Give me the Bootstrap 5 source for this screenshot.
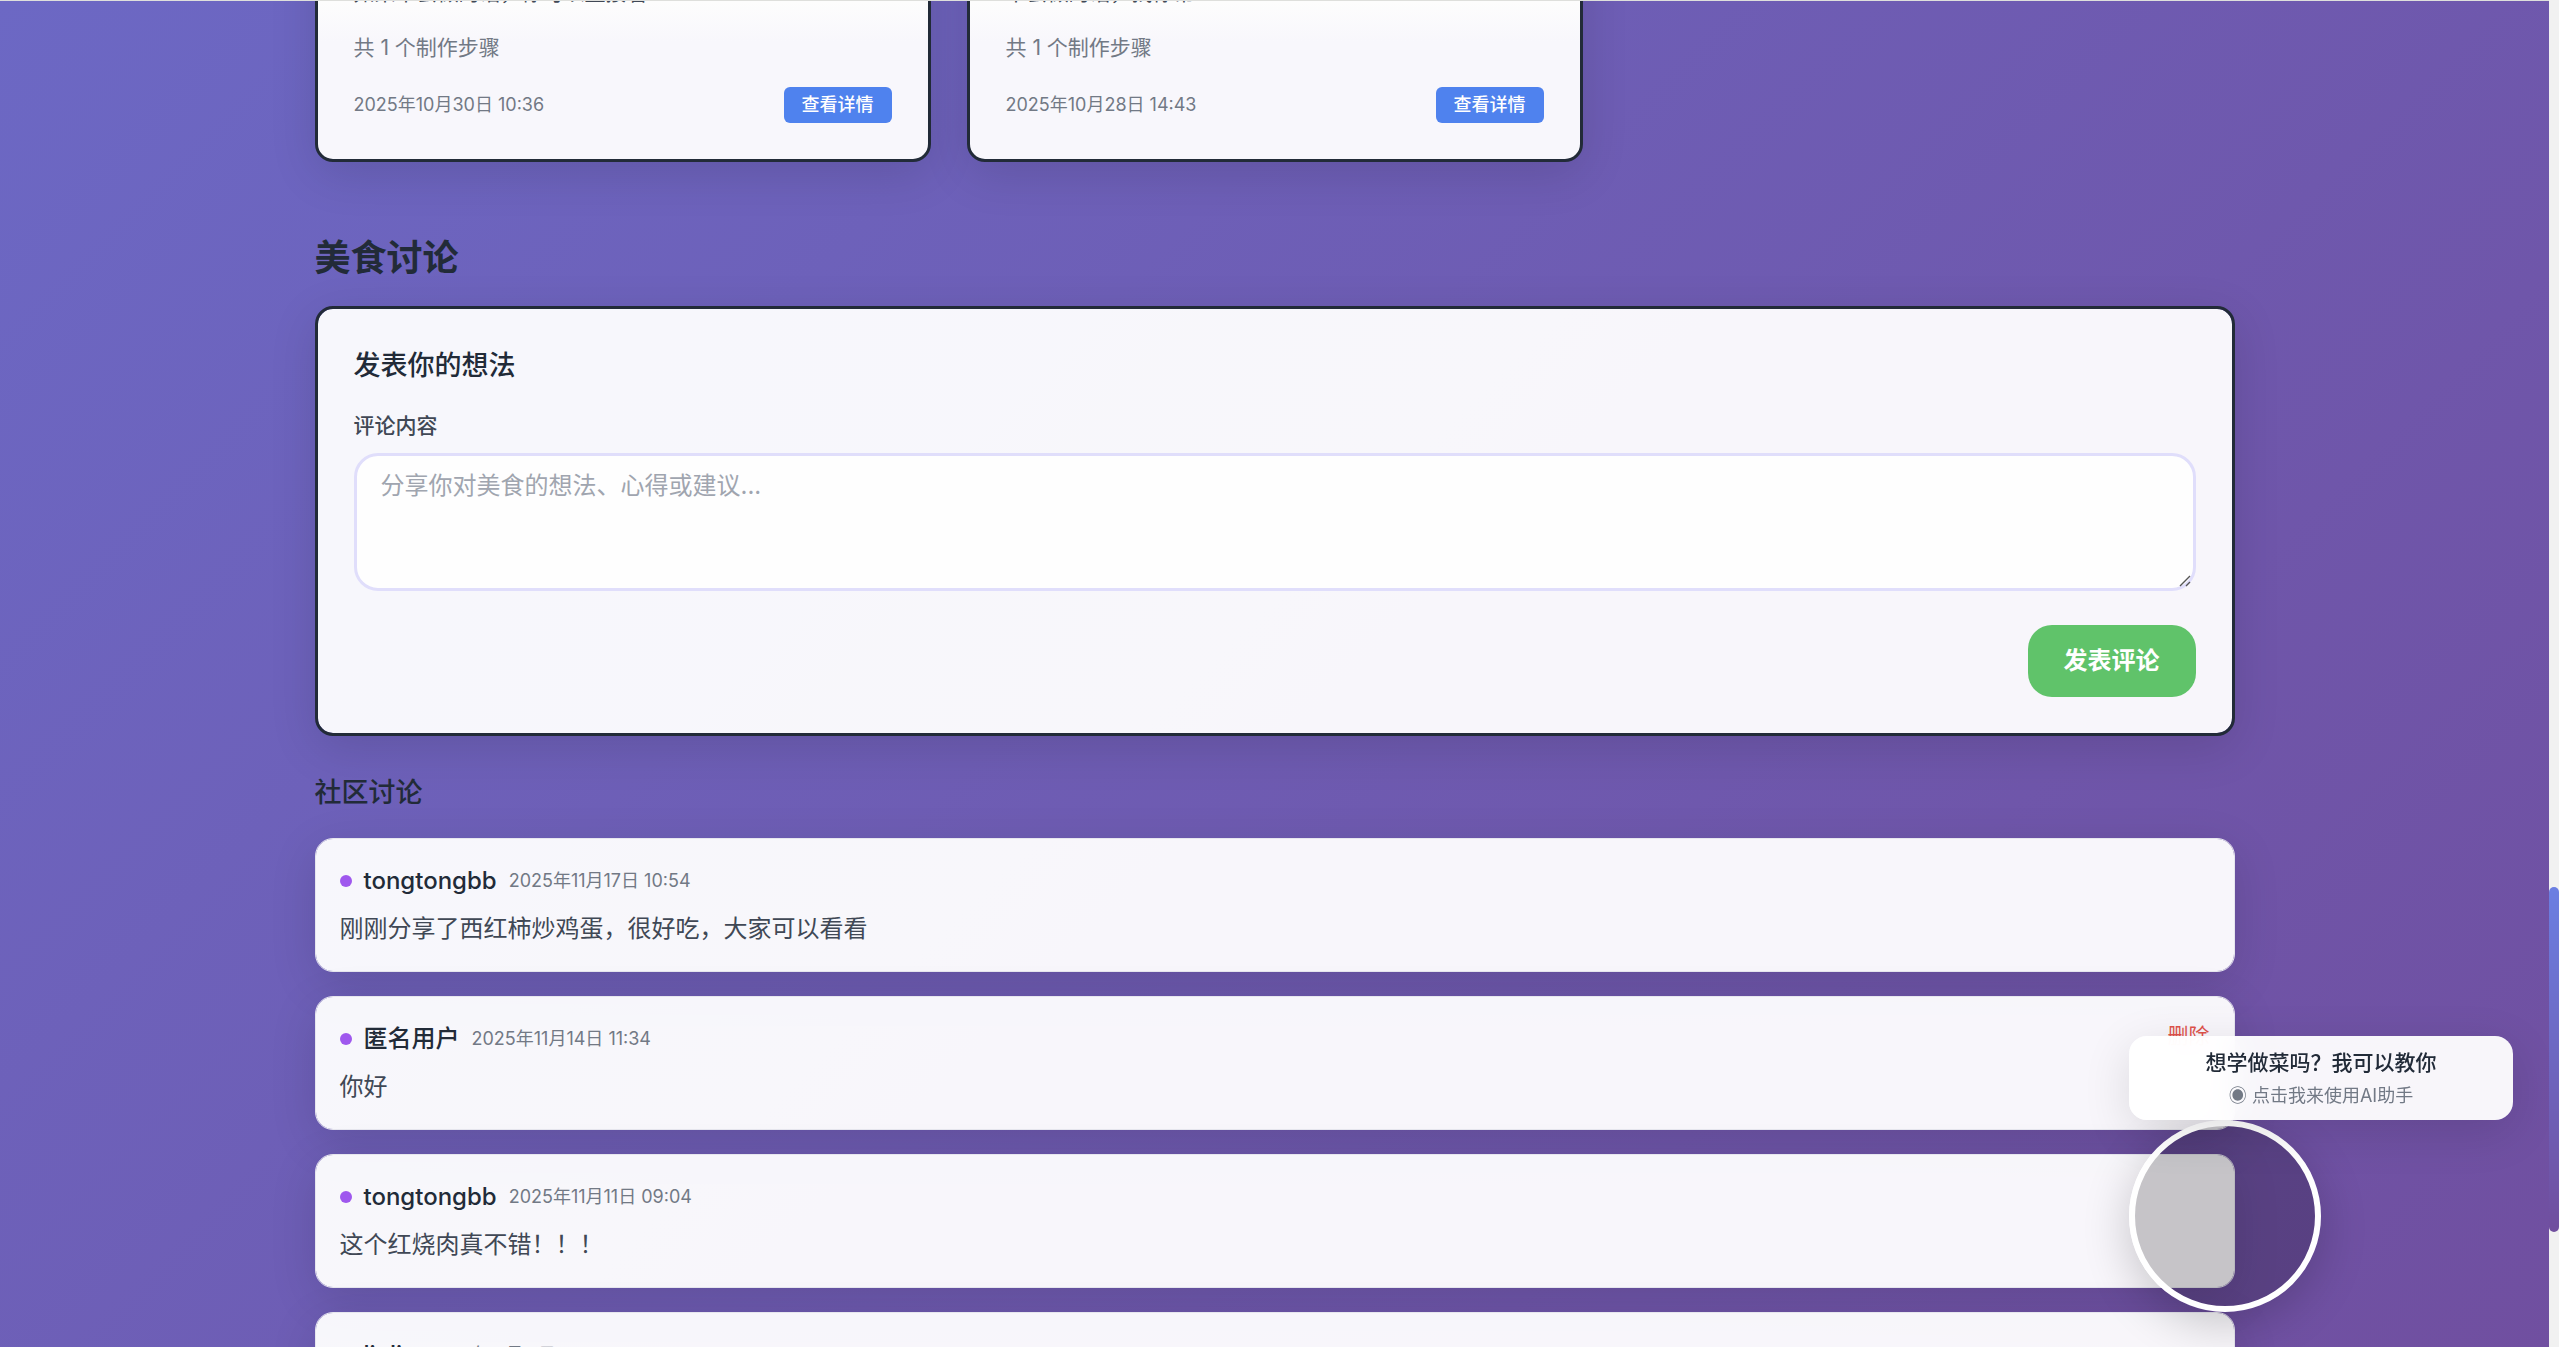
<!DOCTYPE html>
<html lang="zh-CN">
<head>
<meta charset="utf-8">
<meta name="viewport" content="width=device-width, initial-scale=1">
<title>美食讨论</title>
<link href="https://cdn.jsdelivr.net/npm/bootstrap@5.3.0/dist/css/bootstrap.min.css" rel="stylesheet">
<style>
  body {
    font-family: Inter, "Noto Sans CJK SC", sans-serif;
    color: #222b38;
    background: linear-gradient(135deg, #6c68c4 0%, #704fa0 100%) no-repeat;
    height: 100vh;
    overflow: hidden;
    font-size: 24px;
    line-height: 36px;
  }
  .top-line { height: 1px; background: #dedfdc; z-index: 5; }
  .page-scroll { width: 10px; background: #f1f1f1; z-index: 6; }
  .page-thumb { top: 887px; height: 345px; border-radius: 5px; background: linear-gradient(180deg, #6b7fe2, #704e9e); }
  .page-wrap { padding-right: 10px; }
  .page-main { max-width: 1920px; }
  .recipe-grid { display: grid; grid-template-columns: repeat(3, 1fr); gap: 36px; margin-bottom: 72px; margin-top: -61px; }
  .panel-box {
    background: rgba(255, 255, 255, .95);
    border: 3px solid #222b38;
    border-radius: 18px;
    padding: 36px;
    box-shadow: 0 12px 48px rgba(0, 0, 0, .12);
    background-clip: padding-box;
  }
  .recipe-box { background: linear-gradient(#fdfdfd 60px, #f8f7fc 100px); }
  .recipe-text { margin-bottom: 25px; }
  .comment-form { margin-bottom: 36px; }
  .txt-md { font-size: 21px; line-height: 30px; }
  .txt-sm { font-size: 18px; line-height: 24px; }
  .ink-mute { color: #727985; }
  .ink-mid { color: #404855; }
  .btn-view { font-size: 18px; line-height: 24px; padding: 6px 18px; border: 0; border-radius: 6px; background: #4f82ee; color: #fff; font-weight: 500; }
  .title-xl { font-size: 36px; line-height: 48px; font-weight: 700; margin-bottom: 24px; }
  .title-md { font-size: 27px; line-height: 42px; font-weight: 500; margin-bottom: 24px; }
  .label-md { font-size: 21px; line-height: 30px; margin-bottom: 12px; }
  .area-wrap { margin-bottom: 34px; }
  .input-area, .input-area:focus {
    display: block; height: 138px; padding: 12px 24px; border: 3px solid #e0defb; border-radius: 24px;
    font-size: 24px; line-height: 36px; background: #fefefe; box-shadow: none; resize: none;
  }
  .input-area::placeholder { color: #a0a5af; }
  .area-grip { right: 5px; bottom: 4px; pointer-events: none; }
  .btn-post { font-size: 24px; line-height: 36px; padding: 18px 36px; border: 0; border-radius: 24px; background: #60c36a; color: #fff; font-weight: 600; }
  .feed { gap: 24px; }
  .feed-item { background: rgba(255, 255, 255, .95); border: 1px solid #e6e6ee; background-clip: padding-box; border-radius: 18px; padding: 24px; box-shadow: 0 12px 48px rgba(0, 0, 0, .12); }
  .feed-dot { width: 12px; height: 12px; background: #9f58ee; }
  .feed-head { gap: 12px; margin-bottom: 12px; }
  .btn-del { font-size: 21px; line-height: 30px; color: #e0524b; }
  .helper { right: 46px; bottom: 35px; width: 384px; z-index: 4; }
  .helper-tip { padding: 12px; border-radius: 18px; background: rgba(255, 255, 255, .95); box-shadow: 0 12px 48px rgba(0, 0, 0, .12); -webkit-backdrop-filter: blur(15px); backdrop-filter: blur(15px); }
  .helper-title { margin-bottom: 6px; }
  .helper-orb { width: 192px; height: 192px; border: 6px solid #fff; background: rgba(0, 0, 0, .2); box-shadow: 0 12px 48px rgba(0, 0, 0, .2); }
</style>
</head>
<body>
<div class="top-line position-fixed top-0 start-0 w-100"></div>
<div class="page-scroll position-fixed top-0 end-0 h-100"><div class="page-thumb position-absolute w-100"></div></div>

<div class="page-wrap">
<main class="page-main mx-auto">
  <section class="recipe-grid">
    <article class="panel-box recipe-box">
      <p class="txt-md ink-mid recipe-text">如果不会做的话，你可以直接看</p>
      <p class="txt-md ink-mute mb-4">共 1 个制作步骤</p>
      <div class="d-flex justify-content-between align-items-center">
        <time class="txt-sm ink-mute">2025年10月30日 10:36</time>
        <button type="button" class="btn btn-view">查看详情</button>
      </div>
    </article>
    <article class="panel-box recipe-box">
      <p class="txt-md ink-mid recipe-text">不会做的话，找你帮</p>
      <p class="txt-md ink-mute mb-4">共 1 个制作步骤</p>
      <div class="d-flex justify-content-between align-items-center">
        <time class="txt-sm ink-mute">2025年10月28日 14:43</time>
        <button type="button" class="btn btn-view">查看详情</button>
      </div>
    </article>
  </section>

  <h2 class="title-xl">美食讨论</h2>
  <form class="panel-box comment-form">
    <h3 class="title-md">发表你的想法</h3>
    <label for="comment" class="label-md fw-medium ink-mid d-block">评论内容</label>
    <div class="area-wrap position-relative">
      <textarea id="comment" class="form-control input-area" rows="3" placeholder="分享你对美食的想法、心得或建议..."></textarea>
      <svg class="area-grip position-absolute" width="12" height="12" viewBox="0 0 12 12" fill="none" stroke="#555" stroke-width="1.4" aria-hidden="true"><path d="M1 11 11 1M7 11l4-4"/></svg>
    </div>
    <div class="d-flex justify-content-end">
      <button type="button" class="btn btn-post">发表评论</button>
    </div>
  </form>

  <h3 class="title-md">社区讨论</h3>
  <div class="feed d-flex flex-column">
    <article class="feed-item">
      <div class="feed-head d-flex align-items-center">
        <span class="feed-dot rounded-circle"></span><span class="fw-medium">tongtongbb</span>
        <time class="txt-sm ink-mute">2025年11月17日 10:54</time>
      </div>
      <p class="ink-mid mb-0">刚刚分享了西红柿炒鸡蛋，很好吃，大家可以看看</p>
    </article>
    <article class="feed-item d-flex justify-content-between align-items-start">
      <div>
        <div class="feed-head d-flex align-items-center">
          <span class="feed-dot rounded-circle"></span><span class="fw-medium">匿名用户</span>
          <time class="txt-sm ink-mute">2025年11月14日 11:34</time>
        </div>
        <p class="ink-mid mb-0">你好</p>
      </div>
      <button type="button" class="btn btn-del border-0 p-0">删除</button>
    </article>
    <article class="feed-item">
      <div class="feed-head d-flex align-items-center">
        <span class="feed-dot rounded-circle"></span><span class="fw-medium">tongtongbb</span>
        <time class="txt-sm ink-mute">2025年11月11日 09:04</time>
      </div>
      <p class="ink-mid mb-0">这个红烧肉真不错！！！</p>
    </article>
    <article class="feed-item">
      <div class="feed-head d-flex align-items-center">
        <span class="feed-dot rounded-circle"></span><span class="fw-medium">linlin</span>
        <time class="txt-sm ink-mute">2025年11月11日 09:01</time>
      </div>
      <p class="ink-mid mb-0">你好</p>
    </article>
  </div>
</main>
</div>

<aside class="helper position-fixed">
  <div class="helper-tip text-center">
    <div class="txt-md fw-medium helper-title">想学做菜吗？我可以教你</div>
    <div class="txt-sm ink-mute">◉ 点击我来使用AI助手</div>
  </div>
  <button type="button" class="helper-orb rounded-circle d-block p-0" aria-label="AI助手"></button>
</aside>
<script src="https://cdn.jsdelivr.net/npm/bootstrap@5.3.0/dist/js/bootstrap.bundle.min.js"></script>
</body>
</html>
